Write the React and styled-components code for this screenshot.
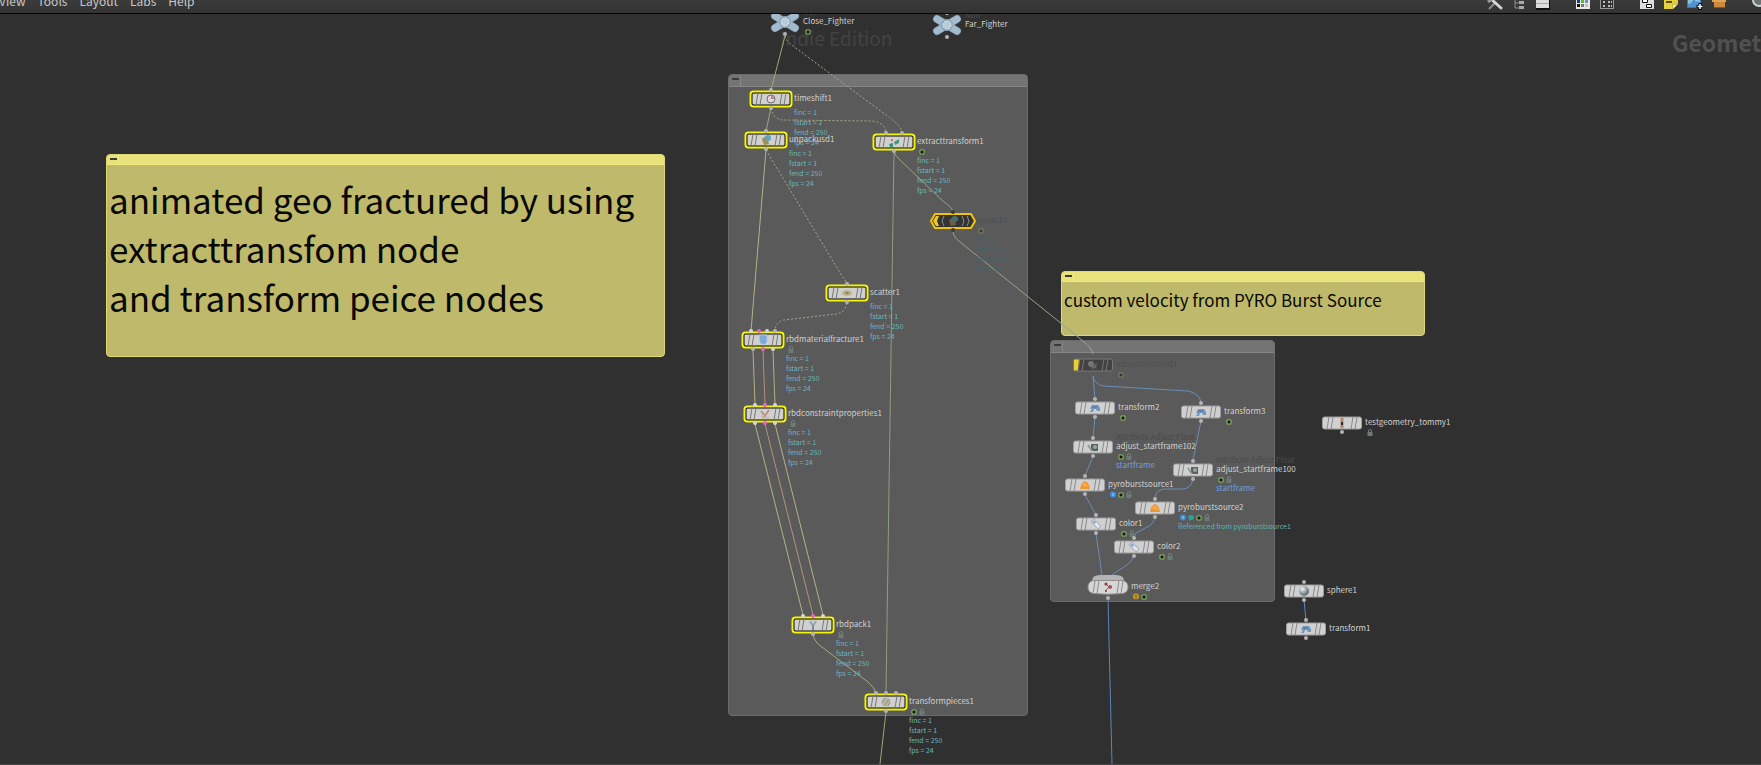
import React from "react";
import styled, { createGlobalStyle, css } from "styled-components";

const GlobalStyle = createGlobalStyle`
  * { box-sizing: border-box; }
  html, body, #root { height: 100%; }
  body {
    margin: 0;
    background: #303030;
    font-family: "Noto Sans CJK SC", "Noto Sans", sans-serif;
    overflow: hidden;
  }
  button { font: inherit; color: inherit; border: 0; padding: 0; background: none; }
`;

const Editor = styled.main`
  display: flex;
  flex-direction: column;
  height: 100%;
`;

/* ---------- top bar ---------- */

const TopBar = styled.header`
  flex: none;
  display: flex;
  justify-content: space-between;
  align-items: flex-end;
  height: 14px;
  overflow: hidden;
  background: linear-gradient(#3b3b3b, #333333);
  border-bottom: 1px solid #050505;
`;

const Menu = styled.nav`
  display: flex;
  gap: 12px;
  margin-left: -1px;
  padding-bottom: 2px;
  font-size: 12px;
  line-height: 20px;
  color: #c8c8c8;
`;

const Tools = styled.div`
  display: flex;
  gap: 16px;
  margin-right: -10px;
  padding-bottom: 3px;
`;

const ToolGroup = styled.div`
  display: flex;
`;

const ToolButton = styled.button`
  display: flex;
  justify-content: center;
  width: 24px;
  height: 16px;
`;

const toolIcons = {
  tools: (
    <>
      <path d="M2 15 L9 8" stroke="#8d8d8d" strokeWidth="2" />
      <path d="M4 5 L14 14" stroke="#d4d4d4" strokeWidth="3" strokeLinecap="round" />
      <path d="M1 8 L7 3" stroke="#999" strokeWidth="3" />
    </>
  ),
  tree: (
    <>
      <path d="M4 0V14M4 5H8M4 9H8M4 14H8" stroke="#8b938b" strokeWidth="1" fill="none" />
      <path d="M8 3h5v3H8zM8 7h5v3H8zM8 12h5v3H8z" fill="#a4ada4" />
    </>
  ),
  list: (
    <>
      <rect x="1" y="1" width="14" height="15" fill="#111" />
      <path d="M1 1h13v3H1zM1 5h13v4H1zM1 10h13v4H1z" fill="#dcdcdc" />
      <path d="M1 4.500h13M1 9.500h13" stroke="#a5a5a5" />
    </>
  ),
  palette: (
    <>
      <rect x="1" y="1" width="14" height="14" fill="#e8e8e8" />
      <path d="M2 5h3v4H2z" fill="#173a86" />
      <path d="M6 5h3v4H6z" fill="#6ab520" />
      <path d="M10 5h3v4h-3z" fill="#6b8fc9" />
      <path d="M2 10h3v3H2z" fill="#111" />
      <path d="M6 10h3v3H6z" fill="#777" />
      <path d="M10 10h3v3h-3z" fill="#c4c4bc" />
    </>
  ),
  table: (
    <>
      <rect x="1.500" y="0.500" width="13" height="14" fill="#333" stroke="#979797" />
      <path d="M4 8h3M9 8h4M4 12h3M9 12h4" stroke="#bdbdbd" strokeWidth="2" strokeDasharray="2 1" />
    </>
  ),
  layout: (
    <>
      <rect x="1" y="0" width="14" height="15" fill="#dedede" />
      <path d="M3.500 5.500h5v3h-5zM7.500 10.500h5v3h-5z" fill="#fff" stroke="#111" />
    </>
  ),
  note: (
    <>
      <path d="M1 0H15V10L10 15H1Z" fill="#e6d13c" />
      <path d="M15 10L10 15L9.500 10.500Z" fill="#fff7a0" stroke="#90801c" strokeWidth="0.500" />
      <path d="M3 8h6" stroke="#222" strokeWidth="1.500" />
    </>
  ),
  image: (
    <>
      <rect x="0.500" y="0.500" width="13" height="13" fill="#8bc3df" stroke="#3e72b8" />
      <path d="M1 13V10l3-1 3-4 2 3 2-1 2 2v4z" fill="#4f93cc" />
      <path d="M13 9v7M9.500 12.500h7" stroke="#000" strokeWidth="3" />
      <path d="M13 10v5M10.500 12.500h5" stroke="#fff" strokeWidth="1.500" />
    </>
  ),
  box: (
    <>
      <path d="M1 3H15V8H1Z" fill="#e0a456" />
      <path d="M3 8H14V14H3Z" fill="#d0883a" />
      <path d="M3 13H14V14H3Z" fill="#8a541a" />
    </>
  ),
  search: <circle cx="8" cy="6" r="6" fill="#68716f" stroke="#c9d0ce" strokeWidth="2" />,
};

const toolGroups = [
  ["tools", "tree", "list"],
  ["palette", "table"],
  ["layout", "note", "image", "box"],
  ["search"],
];

/* ---------- canvas ---------- */

const Canvas = styled.section`
  position: relative;
  flex: 1;
  overflow: hidden;
  background: #303030;
  border-bottom: 1px solid #484848;
`;

/* The world is panned so that its origin sits under the top bar. */
const World = styled.div`
  position: absolute;
  inset: -14px 0 0 0;
`;

const Wires = styled.svg`
  position: absolute;
  inset: 0;
  width: 100%;
  height: 100%;
  fill: none;
  pointer-events: none;
`;

const Watermark = styled.div`
  position: absolute;
  left: ${(p) => p.$x}px;
  top: ${(p) => p.$y}px;
  font-size: ${(p) => p.$size}px;
  line-height: 32px;
  font-weight: ${(p) => (p.$bold ? 700 : 400)};
  color: ${(p) => (p.$bold ? "#505050" : "#434343")};
  white-space: nowrap;
`;

const frameTones = {
  gray: css`
    --edge: #6c6c6c;
    --head: #747474;
    --line: #868686;
    --body: #5a5a5a;
  `,
  yellow: css`
    --edge: #dfd974;
    --head: #e9e27b;
    --line: #f0ea80;
    --body: #bfba6b;
  `,
};

const Frame = styled.section`
  ${(p) => frameTones[p.$tone]}
  position: absolute;
  left: ${(p) => p.$x}px;
  top: ${(p) => p.$y}px;
  width: ${(p) => p.$w}px;
  height: ${(p) => p.$h}px;
  border: 1px solid var(--edge);
  border-radius: 4px;
  background: var(--body);
  overflow: hidden;
`;

const FrameHead = styled.header`
  display: flex;
  align-items: flex-start;
  height: ${(p) => p.$h}px;
  background: var(--head);
  border-bottom: 1px solid var(--line);
`;

const Collapse = styled.button`
  display: flex;
  justify-content: flex-end;
  width: 12px;
  height: 100%;
  padding: 3px 1px 0 0;
  border-right: 1px solid var(--line);

  &::before {
    content: "";
    width: 7px;
    height: 2px;
    background: #3c3c36;
  }
`;

const NoteText = styled.p`
  margin: 0;
  padding: ${(p) => p.$pad}px 2px 0;
  font-size: ${(p) => p.$size}px;
  line-height: ${(p) => p.$line}px;
  color: #080804;
  white-space: pre-line;
`;

function Box({ x, y, w, h, tone, head, children }) {
  return (
    <Frame $x={x} $y={y} $w={w} $h={h} $tone={tone}>
      <FrameHead $h={head}>
        <Collapse type="button" aria-label="Collapse" />
      </FrameHead>
      {children}
    </Frame>
  );
}

/* ---------- nodes ---------- */

const NodeRoot = styled.article`
  position: absolute;
  left: ${(p) => p.$x}px;
  top: ${(p) => p.$y}px;
`;

const NodeShape = styled.svg`
  position: absolute;
  left: -24px;
  top: -14px;
  width: 48px;
  height: 28px;
  overflow: visible;
`;

const Info = styled.div`
  position: absolute;
  left: ${(p) => (p.$near ? 18 : 23)}px;
  top: -7px;
  white-space: nowrap;
`;

const TypeName = styled.div`
  position: absolute;
  bottom: 100%;
  left: 0;
  height: 8px;
  font-size: 8px;
  line-height: 10px;
  color: #4a4a4a;
`;

const Name = styled.div`
  position: relative;
  height: 12px;
  font-size: 8px;
  line-height: 12px;
  color: ${(p) => (p.$dim ? "#4f4f4f" : "#d0d0d0")};
`;

const Badges = styled.div`
  display: flex;
  align-items: center;
  gap: 2px;
  height: 8px;
  padding-left: 2px;
  opacity: ${(p) => (p.$dim ? 0.5 : 1)};
`;

const Badge = styled.svg`
  width: 6px;
  height: 7px;
`;

const Params = styled.div`
  padding-top: ${(p) => (p.$gap ? 3 : 0)}px;
  font-size: ${(p) => p.$size}px;
  line-height: 10px;
  white-space: pre;
  color: ${(p) => p.$color};
`;

const badgeArt = {
  on: (
    <>
      <rect x="0.500" y="1.500" width="5" height="5" rx="1" fill="#8cc063" />
      <rect x="1.500" y="2.500" width="3" height="3" fill="#101810" />
    </>
  ),
  lock: (
    <>
      <path d="M1.500 3.500V2a1.500 1.500 0 013 0v1.500" fill="none" stroke="#71807a" strokeWidth="1" />
      <rect x="0.500" y="3" width="5" height="4" fill="#6a7a74" />
    </>
  ),
  info: (
    <>
      <circle cx="3" cy="3.500" r="3" fill="#3d8ee0" />
      <path d="M3 2v3" stroke="#a9cdf5" />
    </>
  ),
  comment: <path d="M0 3.500a3 2.500 0 016 0a3 2.500 0 01-3 2.500L1 7V5z" fill="#2aa39a" />,
  warn: (
    <>
      <circle cx="3" cy="3.500" r="3" fill="#c79a1e" />
      <path d="M3 2v2M3 5v1" stroke="#4d3b05" />
    </>
  ),
};

const glyphs = {
  clock: (
    <>
      <circle r="4" fill="#e0d6d9" stroke="#77686c" />
      <path d="M0 0V-3A3 3 0 013 0Z" fill="#b87c8c" />
    </>
  ),
  unpack: (
    <>
      <path d="M-4 -1L0 -4L2 0L3 4L-2 5Z" fill="#a88c4c" />
      <circle cx="2" cy="-2" r="3" fill="#5aa6c0" />
    </>
  ),
  extract: (
    <>
      <path d="M0 0L5 -3L5 1L1 3Z" fill="#3f9b80" />
      <path d="M-5 2L-1 1L-1 5L-4 5Z" fill="#37917a" />
      <circle cx="-2" cy="-2" r="1" fill="#c04a4a" />
    </>
  ),
  scatter: (
    <>
      <ellipse rx="5" ry="3" fill="#b9b28a" />
      <ellipse rx="2" ry="1" fill="#8d8246" />
    </>
  ),
  fracture: <path d="M-4 -5L4 -5L4 2L1 5L-3 3Z" fill="#7fa9d8" stroke="#aac6e6" />,
  constraint: (
    <>
      <path d="M-4 -3L0 2L4 -4" stroke="#b08a70" strokeWidth="1.500" fill="none" />
      <path d="M-4 2L4 4M-2 5L1 -1" stroke="#c9a48c" fill="none" />
    </>
  ),
  pack: (
    <>
      <path d="M-3 -4L0 1L3 -4" stroke="#94a6ae" strokeWidth="2" fill="none" />
      <path d="M0 0V5" stroke="#7b8d95" strokeWidth="2" />
    </>
  ),
  pieces: (
    <>
      <circle r="4.500" fill="#bab6a4" />
      <path d="M-4 1L-1 -4M-2 4L3 -3M2 4L4 0" stroke="#979280" strokeWidth="1" />
    </>
  ),
  centroid: (
    <>
      <circle cx="-2" cy="-1" r="3" fill="#a5aaaa" />
      <path d="M-2 2L4 -2L3 3L-1 4Z" fill="#8a8a8a" />
    </>
  ),
  transform: (
    <>
      <path d="M-5 1L-3 -3H3L5 0V3H2L1 1H-1L-2 4H-5L-3 1Z" fill="#7396bd" />
      <path d="M-3 -1H2" stroke="#4a75a6" />
    </>
  ),
  adjust: (
    <>
      <rect x="-2" y="-3" width="7" height="7" fill="#59635f" />
      <path d="M-5 -2L-1 4" stroke="#8f9c93" strokeWidth="2" />
      <circle cx="2" cy="0" r="2" fill="#98a6a8" />
    </>
  ),
  pyro: (
    <>
      <path d="M-5 4L-4 0L-1 -4L2 -3L4 0L5 4Z" fill="#ee9630" />
      <path d="M-3 1L-1 -3L2 -1L3 2Z" fill="#f7ac4c" />
    </>
  ),
  color: (
    <g transform="rotate(45)">
      <rect x="-5" y="-2" width="10" height="4" rx="1" fill="#e3e7ea" stroke="#a3abb8" />
      <rect x="-4" y="-1" width="3" height="2" fill="#7f9fd0" />
    </g>
  ),
  merge: (
    <>
      <path d="M-3 -4L1 0L-3 4M0 0H4" stroke="#7e7074" fill="none" />
      <circle cx="-2" cy="-3" r="1.500" fill="#8d3038" />
      <circle cx="2" cy="0" r="2" fill="#a3545a" />
      <circle cx="-2" cy="4" r="1" fill="#8d3038" />
    </>
  ),
  tommy: (
    <>
      <path d="M0 -5V5" stroke="#b98570" strokeWidth="3" />
      <path d="M-1 -1H1V2H-1Z" fill="#352b2b" />
    </>
  ),
  sphere: <circle r="5" fill="url(#ball)" />,
};

/* Slanted dividers that mark off the flag areas at either end of a node. */
const Dividers = ({ color }) => (
  <path
    d="M-15 6L-13 -6M-11 6L-9 -6M9 6L11 -6M13 6L15 -6"
    stroke={color}
    strokeWidth="1"
  />
);

const shapes = {
  selected: (
    <>
      <rect x="-20.500" y="-7.500" width="41" height="15" rx="3" fill="#050505" stroke="#f4f409" strokeWidth="2" />
      <rect x="-18.500" y="-5.500" width="37" height="11" rx="1" fill="#d0d0d0" />
      <Dividers color="#777" />
    </>
  ),
  plain: (
    <>
      <rect x="-19.500" y="-6" width="39" height="12" rx="2" fill="#d0d0d0" stroke="#9d9d9d" />
      <Dividers color="#8a8a8a" />
    </>
  ),
  bypassed: (
    <>
      <rect x="-19.500" y="-6" width="39" height="12" rx="2" fill="#424242" stroke="#777" />
      <path d="M-19 -5.500H-14L-15 5.500H-19Z" fill="#ebcf2d" />
      <Dividers color="#777" />
    </>
  ),
  hex: (
    <>
      <path d="M-22 0L-18 -7H18L22 0L18 7H-18Z" fill="#333" stroke="#f5c400" strokeWidth="2" />
      <path d="M-20 0L-17 -5H-14L-16 0L-14 5H-17Z" fill="#ecc92a" />
      <path d="M-9 -5L-11 0L-9 5M9 -5L11 0L9 5M14 -5L16 0L14 5" stroke="#8e8e8e" fill="none" />
    </>
  ),
  merge: (
    <>
      <path d="M-16 -6Q-16 -12 -8 -12H8Q16 -12 16 -6Z" fill="#b4b4b4" />
      <path d="M-15 -6.500H15Q20 -5 20 0Q20 5 15 6.500Q0 8 -15 6.500Q-20 5 -20 0Q-20 -5 -15 -6.500Z" fill="#d6d6d6" stroke="#8f8f8f" />
      <Dividers color="#8a8a8a" />
    </>
  ),
  null: (
    <>
      <path d="M-10 -6L10 6M10 -6L-10 6" stroke="#6f8494" strokeWidth="8" strokeLinecap="round" />
      <path d="M-10 -6L10 6M10 -6L-10 6" stroke="#a3bbce" strokeWidth="7" strokeLinecap="round" />
      <circle r="6" fill="#8aa4b8" />
      <circle r="4" fill="#b9cbd9" stroke="#e6edf2" strokeDasharray="2 1" />
    </>
  ),
};

const portColor = { g: "#b4b4b4", w: "#d6d6d6", p: "#e866c2", d: "#3a3a3a" };
const frameParams = "finc = 1\nfstart = 1\nfend = 250\nfps = 24";

/* Ports are [x offset, colour key]; i = inputs, o = outputs. */
const one = [[0, "g"]];
const three = [[-10, "w"], [0, "p"], [10, "w"]];

const nodes = [
  { name: "Close_Fighter", x: 785, y: 22, shape: "null", o: one, portY: 12, badges: ["on"], type: "Null" },
  { name: "Far_Fighter", x: 947, y: 25, shape: "null", i: one, o: one, portY: 12, type: "Null" },
  { name: "timeshift1", x: 771, y: 99, shape: "selected", icon: "clock", i: one, o: one, params: frameParams },
  { name: "unpackusd1", x: 766, y: 140, shape: "selected", icon: "unpack", i: one, o: one, params: frameParams },
  { name: "extracttransform1", x: 894, y: 142, shape: "selected", icon: "extract", i: [[-8, "g"], [8, "g"]], o: one, badges: ["on"], params: frameParams },
  { name: "unpack1", x: 953, y: 221, shape: "hex", icon: "unpack", dim: true, i: [[0, "d"]], o: [[0, "d"]], badges: ["on"], params: frameParams },
  { name: "scatter1", x: 847, y: 293, shape: "selected", icon: "scatter", i: one, o: one, params: frameParams },
  { name: "rbdmaterialfracture1", x: 763, y: 340, shape: "selected", icon: "fracture", i: [[-12, "w"], [-4, "p"], [4, "w"], [12, "g"]], o: [[-10, "g"], [0, "p"], [10, "w"]], badges: ["lock"], params: frameParams },
  { name: "rbdconstraintproperties1", x: 765, y: 414, shape: "selected", icon: "constraint", i: three, o: three, badges: ["lock"], params: frameParams },
  { name: "rbdpack1", x: 813, y: 625, shape: "selected", icon: "pack", i: three, o: one, badges: ["lock"], params: frameParams },
  { name: "transformpieces1", x: 886, y: 702, shape: "selected", icon: "pieces", i: [[-10, "g"], [0, "g"], [10, "g"]], o: one, badges: ["on", "lock"], params: frameParams },
  { name: "extractcentroid1", x: 1093, y: 365, shape: "bypassed", icon: "centroid", dim: true, badges: ["on"] },
  { name: "transform2", x: 1095, y: 408, shape: "plain", icon: "transform", i: one, o: one, badges: ["on"] },
  { name: "transform3", x: 1201, y: 412, shape: "plain", icon: "transform", i: one, o: one, badges: ["on"] },
  { name: "adjust_startframe102", x: 1093, y: 447, shape: "plain", icon: "adjust", i: one, o: one, badges: ["on", "lock"], type: "Attribute Adjust Float", params: "startframe", paramSize: 8, tint: "#6f9fe0" },
  { name: "adjust_startframe100", x: 1193, y: 470, shape: "plain", icon: "adjust", i: one, o: one, badges: ["on", "lock"], type: "Attribute Adjust Float", params: "startframe", paramSize: 8, tint: "#6f9fe0" },
  { name: "pyroburstsource1", x: 1085, y: 485, shape: "plain", icon: "pyro", i: one, o: one, badges: ["info", "on", "lock"] },
  { name: "pyroburstsource2", x: 1155, y: 508, shape: "plain", icon: "pyro", i: one, o: one, badges: ["info", "comment", "on", "lock"], params: "Referenced from pyroburstsource1", tint: "#5cb2b4" },
  { name: "color1", x: 1096, y: 524, shape: "plain", icon: "color", i: one, o: one, badges: ["on", "lock"] },
  { name: "color2", x: 1134, y: 547, shape: "plain", icon: "color", i: one, o: one, badges: ["on", "lock"] },
  { name: "merge2", x: 1108, y: 587, shape: "merge", icon: "merge", o: one, portY: 11, badges: ["warn", "on"] },
  { name: "testgeometry_tommy1", x: 1342, y: 423, shape: "plain", icon: "tommy", o: one, badges: ["lock"] },
  { name: "sphere1", x: 1304, y: 591, shape: "plain", icon: "sphere", i: one, o: one },
  { name: "transform1", x: 1306, y: 629, shape: "plain", icon: "transform", i: one, o: one },
];

function Ports({ ports, y }) {
  return ports.map(([dx, c]) => <circle key={dx} cx={dx} cy={y} r="2" fill={portColor[c]} />);
}

function Node({ name, x, y, shape, icon, i = [], o = [], portY = 9, badges, params, paramSize = 7, type, dim, tint = "#6bb6bf" }) {
  return (
    <NodeRoot $x={x} $y={y}>
      <NodeShape viewBox="-24 -14 48 28" aria-hidden="true">
        {shapes[shape]}
        {icon && <g opacity={dim ? 0.5 : 1}>{glyphs[icon]}</g>}
        <Ports ports={i} y={-portY} />
        <Ports ports={o} y={portY} />
      </NodeShape>
      <Info $near={shape === "null"}>
        {type && <TypeName>{type}</TypeName>}
        <Name $dim={dim}>{name}</Name>
        {badges && (
          <Badges $dim={dim}>
            {badges.map((b) => <Badge key={b} viewBox="0 0 6 7">{badgeArt[b]}</Badge>)}
          </Badges>
        )}
        {params && <Params $gap={!badges} $size={paramSize} $color={dim ? "#42666b" : tint}>{params}</Params>}
      </Info>
    </NodeRoot>
  );
}

/* ---------- wires ---------- */

const wires = [
  ["#97ab76", "M785 36L771 90M771 108L766 131M886 712L880 764"],
  ["#8f9f7c", "M894 151L886 693"],
  ["#97a583", "M894 151Q895 156 900 160L944 202Q952 207 953 212M953 231Q953 237 960 242L1083 341Q1092 348 1093 354"],
  ["#a3aa7f", "M813 634Q813 639 818 644L868 682Q875 688 876 693"],
  ["#b3b183", "M766 150L751 331M753 350L755 405M773 350L775 405M755 424L803 615M775 424L823 615"],
  ["#b58f7b", "M763 350L765 405M765 424L813 615"],
  ["#6b8db6", "M1093 376L1095 399M1093 376Q1095 385 1104 386L1188 391Q1199 393 1201 402M1095 417L1093 437M1093 456L1085 476M1085 495L1096 515M1096 533L1102 576M1201 421L1193 460M1193 479Q1191 489 1182 489L1164 489Q1155 490 1155 499M1155 518Q1153 524 1149 526L1136 533L1134 538M1134 556Q1132 561 1128 564L1112 575"],
  ["#5b86bd", "M1108 598L1112 764M1304 600L1306 621"],
];

const dottedWires = [
  "M785 36Q787 42 793 46L886 115Q900 124 902 132",
  "M771 108Q773 119 782 120L872 121Q884 122 886 132",
  "M766 150L842 276Q846 281 847 284",
  "M847 303Q845 313 836 314L784 320Q775 322 775 331",
];

export default function App() {
  return (
    <Editor>
      <GlobalStyle />
      <TopBar>
        <Menu>
          {["View", "Tools", "Layout", "Labs", "Help"].map((m) => (
            <button type="button" key={m}>{m}</button>
          ))}
        </Menu>
        <Tools>
          {toolGroups.map((group) => (
            <ToolGroup key={group[0]}>
              {group.map((t) => (
                <ToolButton type="button" key={t} aria-label={t}>
                  <svg width="16" height="16" fill="none">{toolIcons[t]}</svg>
                </ToolButton>
              ))}
            </ToolGroup>
          ))}
        </Tools>
      </TopBar>
      <Canvas>
        <World>
          <Watermark $x={780} $y={22} $size={19}>Indie Edition</Watermark>
          <Watermark $x={1672} $y={26} $size={23} $bold>Geometry</Watermark>

          <Box x={728} y={74} w={300} h={642} tone="gray" head={12} />
          <Box x={106} y={154} w={559} h={203} tone="yellow" head={10}>
            <NoteText $size={35} $line={49} $pad={9}>
              {"animated geo fractured by using\nextracttransfom node\nand transform peice nodes"}
            </NoteText>
          </Box>
          <Box x={1061} y={271} w={364} h={65} tone="yellow" head={10}>
            <NoteText $size={17} $line={24} $pad={6}>custom velocity from PYRO Burst Source</NoteText>
          </Box>
          <Box x={1050} y={340} w={225} h={262} tone="gray" head={12} />

          <Wires aria-hidden="true">
            <defs>
              <radialGradient id="ball" cx="0.35" cy="0.3" r="0.8">
                <stop offset="0" stopColor="#f2f6f8" />
                <stop offset="0.500" stopColor="#94a0a6" />
                <stop offset="1" stopColor="#4c555a" />
              </radialGradient>
            </defs>
            {wires.map(([color, d]) => <path key={d} d={d} stroke={color} />)}
            {dottedWires.map((d) => <path key={d} d={d} stroke="#a4ab86" strokeDasharray="2 2" />)}
          </Wires>

          {nodes.map((n) => <Node key={n.name} {...n} />)}
        </World>
      </Canvas>
    </Editor>
  );
}
